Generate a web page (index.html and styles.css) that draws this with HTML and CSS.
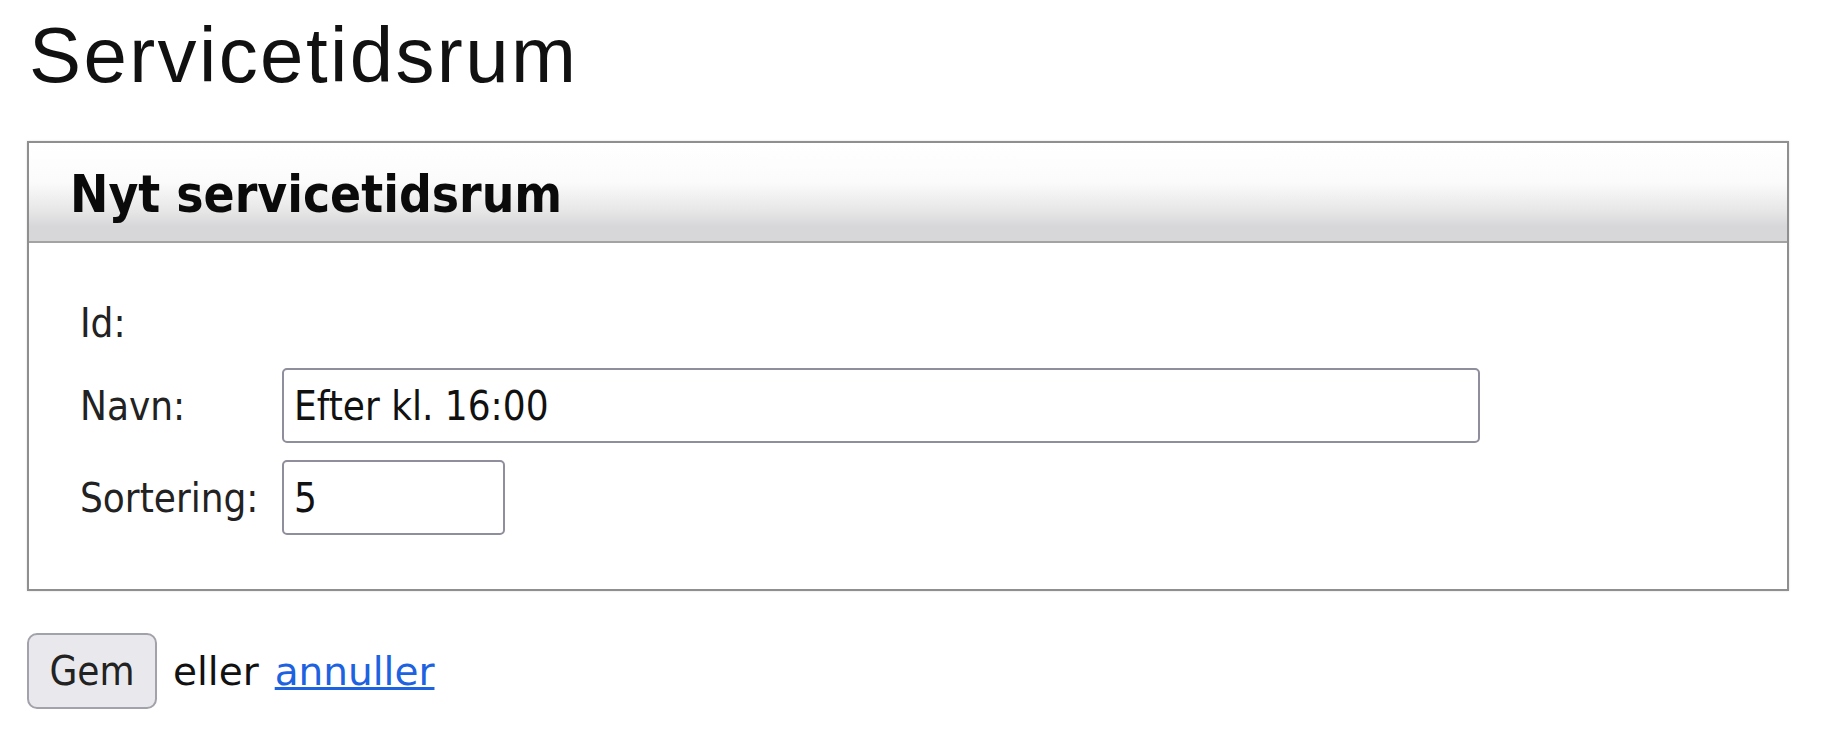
FILE: index.html
```html
<!DOCTYPE html>
<html lang="da">
<head>
  <meta charset="UTF-8">
  <title>Servicetidsrum</title>
  <link rel="stylesheet" href="styles.css">
</head>
<body>
  <h1 class="page-title">Servicetidsrum</h1>

  <form class="edit-form">
    <div class="panel">
      <div class="panel-head">
        <h2>Nyt servicetidsrum</h2>
      </div>
      <div class="panel-body">
        <div class="field">
          <label>Id:</label>
          <span></span>
        </div>
        <div class="field">
          <label for="navn">Navn:</label>
          <input type="text" id="navn" class="input-wide" value="Efter kl. 16:00">
        </div>
        <div class="field">
          <label for="sortering">Sortering:</label>
          <input type="text" id="sortering" class="input-short" value="5">
        </div>
      </div>
    </div>

    <div class="actions">
      <button type="submit" class="btn">Gem</button>
      <span>eller</span>
      <a href="#">annuller</a>
    </div>
  </form>
</body>
</html>
```

FILE: styles.css
```css
body {
  margin: 0;
  padding: 0 27px;
  color: #111;
  font-family: "DejaVu Sans Condensed", "DejaVu Sans", sans-serif;
  font-size: 40px;
}

.page-title {
  margin: 16px 0 47px 2px;
  font-family: "Liberation Sans", Arial, sans-serif;
  font-size: 78px;
  font-weight: normal;
  line-height: 1;
  letter-spacing: 2.4px;
}

/* 패널 */
.panel {
  width: 1762px;
  box-sizing: border-box;
  border: 2px solid #8f8f8f;
  box-shadow: 0 0 2px rgba(0, 0, 0, 0.15);
}

.panel-head {
  height: 98px;
  border-bottom: 2px solid #a3a3a3;
  background: linear-gradient(#fff 0%, #fbfbfb 40%, #e6e6e7 70%, #d7d7d9 85%, #d7d7d9 100%);
  display: flex;
  align-items: center;
}

.panel-head h2 {
  margin: 0 0 0 41px;
  padding-top: 4px;
  font-size: 51px;
  font-weight: bold;
  color: #0a0a0a;
}

.panel-body {
  padding: 55px 0 54px 51px;
  display: flex;
  flex-direction: column;
  gap: 17px;
}

.field {
  display: grid;
  grid-template-columns: 202px auto;
  align-items: center;
  min-height: 50px;
}

.field:first-child {
  margin-bottom: 3px;
}

.field label {
  line-height: 50px;
  color: #222;
}

input {
  height: 75px;
  box-sizing: border-box;
  border: 2px solid #8e8e9c;
  border-radius: 5px;
  padding: 0 10px;
  font-family: inherit;
  font-size: 40px;
  color: #111;
  background: #fff;
}

.input-wide {
  width: 1198px;
}

.input-short {
  width: 223px;
}

/* 버튼 */
.actions {
  margin-top: 42px;
  display: flex;
  align-items: center;
  gap: 16px;
  font-family: "DejaVu Sans", sans-serif;
  font-size: 39px;
}

.btn {
  width: 130px;
  height: 76px;
  border: 2px solid #a2a2aa;
  border-radius: 10px;
  background: #e9e9ed;
  font-family: "DejaVu Sans Condensed", "DejaVu Sans", sans-serif;
  font-size: 40px;
  color: #222;
  cursor: pointer;
}

.actions a {
  color: #1d62e0;
}
```
